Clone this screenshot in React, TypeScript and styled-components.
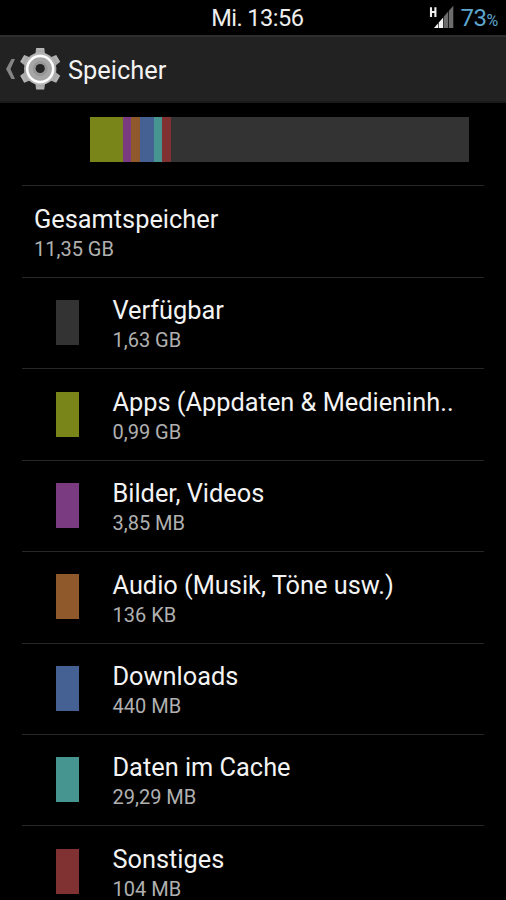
import React from "react";
import styled, { createGlobalStyle } from "styled-components";

const GlobalStyle = createGlobalStyle`
  html, body { margin: 0; background: #000; }
  body { overflow: hidden; }
  * { box-sizing: border-box; }
`;

const Screen = styled.div`
  width: 506px;
  height: 900px;
  overflow: hidden;
  background: #000;
  color: #f3f3f3;
  font-family: Roboto, "Noto Sans", sans-serif;
  display: flex;
  flex-direction: column;
`;

const StatusBar = styled.header`
  flex: none;
  height: 35px;
  display: grid;
  grid-template-columns: 1fr auto 1fr;
  padding: 0 8.5px 0 17px;
`;

const Clock = styled.time`
  font-size: 23.6px;
  line-height: 36px;
  letter-spacing: -0.55px;
  color: #eee;
`;

const StatusIcons = styled.div`
  display: flex;
  justify-content: flex-end;
  align-items: flex-start;
`;

const SignalIcon = styled.svg`
  width: 26px;
  height: 24px;
  margin: 5px 7px 0 0;
`;

const Battery = styled.span`
  font-size: 24px;
  line-height: 36px;
  letter-spacing: -0.6px;
  color: #5ea6cd;
`;

const Percent = styled.span`
  font-size: 16px;
`;

const ActionBar = styled.nav`
  flex: none;
  height: 68px;
  display: flex;
  align-items: center;
  padding-left: 5px;
  background: #222;
  border-top: 2px solid #2d2d2d;
  border-bottom: 2px solid #1a1a1a;
`;

const BackIcon = styled.svg`
  width: 11px;
  height: 22px;
`;

const GearIcon = styled.svg`
  width: 42px;
  height: 44px;
  margin-left: 3px;
`;

const ScreenTitle = styled.h1`
  margin: 2px 0 0 7px;
  font-size: 25.4px;
  line-height: 30px;
  font-weight: 400;
`;

const Content = styled.main`
  flex: 1;
  padding: 14.3px 22.4px 0;
`;

const UsageBar = styled.div`
  display: flex;
  height: 45px;
  width: 379.5px;
  margin: 0 0 23.1px 67.6px;
  background: #333;
`;

const Segment = styled.div<{ $color: string; $width: number }>`
  width: ${(p) => p.$width}px;
  background: ${(p) => p.$color};
`;

const Row = styled.section<{ $indented?: boolean }>`
  height: 91.43px;
  display: flex;
  border-top: 1px solid #272727;
  padding-left: ${(p) => (p.$indented ? 33.6 : 11.6)}px;
`;

const Swatch = styled.div<{ $color: string }>`
  flex: none;
  width: 23px;
  height: 45px;
  margin: 22.3px 33.5px 0 0;
  background: ${(p) => p.$color};
`;

const Labels = styled.div`
  padding-top: 17.5px;
  white-space: nowrap;
`;

const Title = styled.div`
  font-size: 25.35px;
  line-height: 31px;
`;

const Size = styled.div`
  font-size: 20px;
  line-height: 24px;
  margin-top: 2px;
  color: #b0b0b0;
`;

const categories = [
  { title: "Verfügbar", size: "1,63 GB", color: "#333333" },
  { title: "Apps (Appdaten & Medieninh..", size: "0,99 GB", color: "#7a8519", bar: 33 },
  { title: "Bilder, Videos", size: "3,85 MB", color: "#7a3b80", bar: 8.5 },
  { title: "Audio (Musik, Töne usw.)", size: "136 KB", color: "#8f592c", bar: 8.5 },
  { title: "Downloads", size: "440 MB", color: "#456193", bar: 14 },
  { title: "Daten im Cache", size: "29,29 MB", color: "#479590", bar: 8.5 },
  { title: "Sonstiges", size: "104 MB", color: "#803132", bar: 8.5 },
];

function Signal() {
  return (
    <SignalIcon viewBox="0 0 26 24">
      <path d="M3 2.3V12M7.4 2.3V12M3 7H7.4" stroke="#f0f0f0" strokeWidth="2.1" fill="none" />
      <path d="M6 23L10.2 18.2V23Z" fill="#f5f5f5" />
      <path d="M10.8 17.5L15.2 12.4V23H10.8Z" fill="#f5f5f5" />
      <path d="M15.9 11.6L20.2 6.6V23H15.9Z" fill="#6c6c6c" />
      <path d="M20.9 5.8L25.3 0.7V23H20.9Z" fill="#6c6c6c" />
    </SignalIcon>
  );
}

function Gear() {
  return (
    <GearIcon viewBox="0 0 42 44">
      <defs>
        <linearGradient id="metal" x1="0" y1="0" x2="0" y2="1">
          <stop offset="0" stopColor="#b9b9b9" />
          <stop offset=".5" stopColor="#a7a7a7" />
          <stop offset="1" stopColor="#bcbcbc" />
        </linearGradient>
      </defs>
      <g fill="url(#metal)">
        {[0, 60, 120, 180, 240, 300].map((angle) => (
          <path key={angle} d="M16 9L17.2 1H25.2L26.4 9Z" transform={`rotate(${angle} 21.2 21.8)`} />
        ))}
        <circle cx="21.2" cy="21.8" r="16.2" />
      </g>
      <circle cx="21.2" cy="22" r="13" fill="#a6a6a6" stroke="#fcfcfc" strokeWidth="2.6" />
      <circle cx="21.2" cy="21.8" r="7.5" fill="#979797" />
      <circle cx="21.2" cy="21.5" r="4.6" fill="#242424" />
    </GearIcon>
  );
}

export default function App() {
  return (
    <Screen>
      <GlobalStyle />
      <StatusBar>
        <span />
        <Clock>Mi. 13:56</Clock>
        <StatusIcons>
          <Signal />
          <Battery>73<Percent>%</Percent></Battery>
        </StatusIcons>
      </StatusBar>
      <ActionBar>
        <BackIcon viewBox="0 0 11 22">
          <path d="M6.5 1H10L5.5 11L10 21H6.5L1 11Z" fill="#858585" />
        </BackIcon>
        <Gear />
        <ScreenTitle>Speicher</ScreenTitle>
      </ActionBar>
      <Content>
        <UsageBar>
          {categories.map((c) =>
            c.bar ? <Segment key={c.title} $color={c.color} $width={c.bar} /> : null
          )}
        </UsageBar>
        <Row>
          <Labels>
            <Title>Gesamtspeicher</Title>
            <Size>11,35 GB</Size>
          </Labels>
        </Row>
        {categories.map((c) => (
          <Row key={c.title} $indented>
            <Swatch $color={c.color} />
            <Labels>
              <Title>{c.title}</Title>
              <Size>{c.size}</Size>
            </Labels>
          </Row>
        ))}
      </Content>
    </Screen>
  );
}
